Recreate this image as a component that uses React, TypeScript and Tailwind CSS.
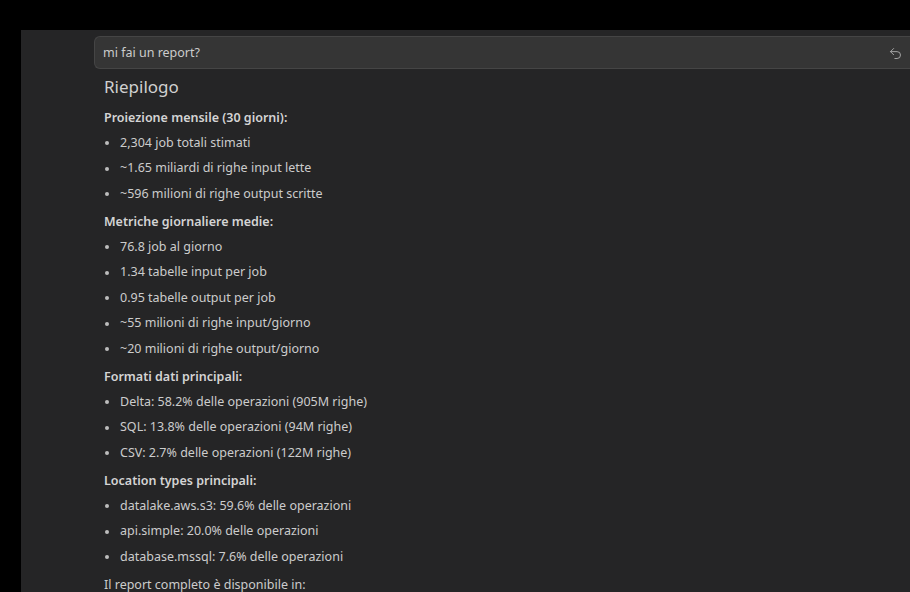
import React from "react";
import { Undo2 } from "lucide-react";

const sections: { title: string; items: string[] }[] = [
  {
    title: "Proiezione mensile (30 giorni):",
    items: [
      "2,304 job totali stimati",
      "~1.65 miliardi di righe input lette",
      "~596 milioni di righe output scritte",
    ],
  },
  {
    title: "Metriche giornaliere medie:",
    items: [
      "76.8 job al giorno",
      "1.34 tabelle input per job",
      "0.95 tabelle output per job",
      "~55 milioni di righe input/giorno",
      "~20 milioni di righe output/giorno",
    ],
  },
  {
    title: "Formati dati principali:",
    items: [
      "Delta: 58.2% delle operazioni (905M righe)",
      "SQL: 13.8% delle operazioni (94M righe)",
      "CSV: 2.7% delle operazioni (122M righe)",
    ],
  },
  {
    title: "Location types principali:",
    items: [
      "datalake.aws.s3: 59.6% delle operazioni",
      "api.simple: 20.0% delle operazioni",
      "database.mssql: 7.6% delle operazioni",
    ],
  },
];

export default function App() {
  return (
    <div
      className="w-[910px] h-[592px] overflow-hidden bg-black flex flex-col"
      style={{ fontFamily: '"Noto Sans", "Open Sans", sans-serif' }}
    >
      <div className="h-[30px] shrink-0" />
      <div className="flex-1 ml-[21px] bg-[#252526] pl-[73px] pt-[6px]">
        {/* request bubble */}
        <div className="h-[33px] rounded-l-[6px] border border-r-0 border-[#454545] bg-[#353535] flex items-center pl-[8px] pr-[7px]">
          <span className="flex-1 text-[12.5px] text-[#cccccc] pt-[1px]">mi fai un report?</span>
          <Undo2 size={15} strokeWidth={1.6} className="text-[#a3a3a3] mt-[1px]" />
        </div>

        <div className="pl-[10px] mt-[6px] text-[#cccccc]">
          <div className="h-[24px] leading-[24px] text-[17px] text-[#d0d0d0]">Riepilogo</div>
          <div className="mt-[6px]">
            {sections.map((s) => (
              <div key={s.title} className="mb-[2px]">
                <div className="h-[25.5px] leading-[25.5px] text-[12.5px] font-semibold text-[#d4d4d4]">
                  {s.title}
                </div>
                <ul>
                  {s.items.map((it) => (
                    <li key={it} className="h-[25.5px] flex items-center text-[12.5px]">
                      <span className="w-[16px] flex justify-start pl-[1px]">
                        <span className="w-[4px] h-[4px] rounded-full bg-[#bdbdbd]" />
                      </span>
                      <span>{it}</span>
                    </li>
                  ))}
                </ul>
              </div>
            ))}
            <div className="h-[25px] leading-[25px] text-[12.5px]">Il report completo è disponibile in:</div>
          </div>
        </div>
      </div>
    </div>
  );
}
